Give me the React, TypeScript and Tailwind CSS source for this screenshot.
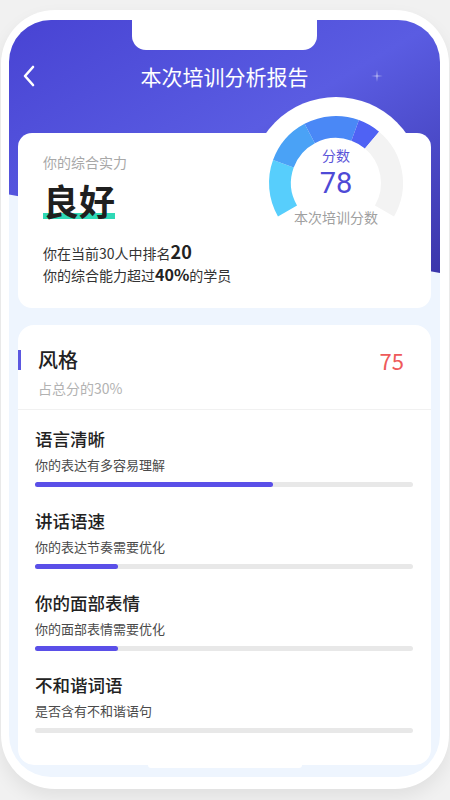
import React from "react";

const font = { fontFamily: '"Noto Sans CJK SC", "Noto Sans", sans-serif' };

const items = [
  { title: "语言清晰", desc: "你的表达有多容易理解", value: 63 },
  { title: "讲话语速", desc: "你的表达节奏需要优化", value: 22 },
  { title: "你的面部表情", desc: "你的面部表情需要优化", value: 22 },
  { title: "不和谐词语", desc: "是否含有不和谐语句", value: 0 },
];

const segments = [
  { from: -120, to: -70, color: "#57cefc" },
  { from: -70, to: -28, color: "#4aa2f6" },
  { from: -28, to: 20, color: "#4a88f6" },
  { from: 20, to: 40, color: "#4f62f4" },
  { from: 40, to: 120, color: "#f3f3f3" },
];

function arc(cx: number, cy: number, r: number, from: number, to: number) {
  const rad = (d: number) => (d * Math.PI) / 180;
  const x1 = cx + r * Math.sin(rad(from));
  const y1 = cy - r * Math.cos(rad(from));
  const x2 = cx + r * Math.sin(rad(to));
  const y2 = cy - r * Math.cos(rad(to));
  const large = to - from > 180 ? 1 : 0;
  return `M ${x1} ${y1} A ${r} ${r} 0 ${large} 1 ${x2} ${y2}`;
}

function Gauge() {
  return (
    <div className="absolute left-[228px] top-[-40px] h-[180px] w-[180px]">
      <svg width="180" height="180" viewBox="0 0 180 180" className="absolute inset-0">
        <circle cx="90" cy="90" r="86" fill="#ffffff" />
        {segments.map((s) => (
          <path
            key={s.from}
            d={arc(90, 90, 56, s.from, s.to)}
            fill="none"
            stroke={s.color}
            strokeWidth="22"
          />
        ))}
      </svg>
      <div className="absolute inset-x-0 top-[54px] flex flex-col items-center">
        <span className="text-[14px] leading-[16px] text-[#5a55d9]">分数</span>
        <span className="mt-[5px] font-['Roboto',sans-serif] text-[29px] leading-[30px] text-[#4e4ad6]">78</span>
        <span className="mt-[9px] text-[14px] leading-[20px] text-[#a0a0a0]">本次培训分数</span>
      </div>
    </div>
  );
}

export default function App() {
  return (
    <div className="h-[800px] w-[450px] overflow-hidden bg-[#f1f1f1] pt-[10px]" style={font}>
      <div className="ml-[1px] h-[779px] w-[448px] rounded-[54px] bg-white pb-[12px] pl-[8px] pr-[9px] pt-[10px] shadow-[0_8px_18px_rgba(0,0,0,0.07)]">
        <div className="relative flex h-[757px] flex-col overflow-hidden rounded-[42px] bg-[#eef5fe] pb-[9px]">
          {/* header background */}
          <div className="absolute inset-x-0 top-0 h-[253px] bg-gradient-to-br from-[#4843d3] via-[#5a5ce2] to-[#3b36ab] [clip-path:polygon(0_0,100%_0,100%_100%,0_69%)]" />
          <div className="absolute left-[123px] top-0 z-20 h-[30px] w-[185px] rounded-b-[14px] bg-white" />

          <div className="relative z-10 mt-[40px] grid h-[32px] grid-cols-[1fr_auto_1fr] items-center">
            <div className="pl-[12px]">
              <svg width="16" height="24" viewBox="0 0 16 24" fill="none" stroke="white" strokeWidth="2.6" strokeLinecap="round" strokeLinejoin="round">
                <path d="M12 3 L4 12 L12 21" />
              </svg>
            </div>
            <h1 className="text-[21px] leading-[30px] text-white">本次培训分析报告</h1>
            <div className="pl-[62px] opacity-60">
              <svg width="12" height="12" viewBox="0 0 12 12" fill="white">
                <path d="M6 0 L6.6 5.4 L12 6 L6.6 6.6 L6 12 L5.4 6.6 L0 6 L5.4 5.4 Z" />
              </svg>
            </div>
          </div>

          <div className="relative z-10 mx-[9px] mt-[41px] h-[175px] rounded-[14px] bg-white pl-[25px] pt-[19px]">
            <p className="text-[14px] leading-[20px] text-[#a8a8a8]">你的综合实力</p>
            <div className="relative mt-[6px] inline-block">
              <span className="absolute left-0 top-[35px] h-[6px] w-[72px] bg-[#2fd9b6]" />
              <span className="relative text-[36px] font-bold leading-[44px] text-[#1f1f1f]">良好</span>
            </div>
            <div className="mt-[19px] text-[14px] leading-[21px] text-[#333]">
              <p>
                你在当前30人中排名<span className="text-[18px] font-bold text-[#222]">20</span>
              </p>
              <p>
                你的综合能力超过<span className="text-[16px] font-bold text-[#222]">40%</span>的学员
              </p>
            </div>
            <Gauge />
          </div>

          <div className="relative z-10 mx-[9px] mt-[17px] flex-1 overflow-hidden rounded-[16px] bg-white">
            <div className="relative border-b border-[#f1f1f1] pb-[11px] pl-[20px] pr-[27px] pt-[21px]">
              <span className="absolute left-0 top-[25px] h-[20px] w-[3px] bg-[#5b57e0]" />
              <div className="flex h-[28px] items-center justify-between">
                <span className="text-[20px] font-medium text-[#222]">风格</span>
                <span className="text-[22px] text-[#ee5a5a]">75</span>
              </div>
              <p className="mt-[4px] text-[14px] leading-[20px] text-[#b2b2b2]">占总分的30%</p>
            </div>
            <div className="flex flex-col gap-[22px] pl-[17px] pr-[18px] pt-[17px]">
              {items.map((it) => (
                <div key={it.title}>
                  <p className="text-[17.5px] font-medium leading-[24px] text-[#222]">{it.title}</p>
                  <p className="mt-[4px] text-[13px] leading-[20px] text-[#4a4a4a]">{it.desc}</p>
                  <div className="mt-[7px] h-[5px] rounded-full bg-[#e8e8e8]">
                    <div className="h-full rounded-full bg-[#5a4fe8]" style={{ width: `${it.value}%` }} />
                  </div>
                </div>
              ))}
            </div>
          </div>
          <div className="mx-auto h-[3px] w-[154px] rounded-b-[3px] bg-white" />
        </div>
      </div>
    </div>
  );
}
